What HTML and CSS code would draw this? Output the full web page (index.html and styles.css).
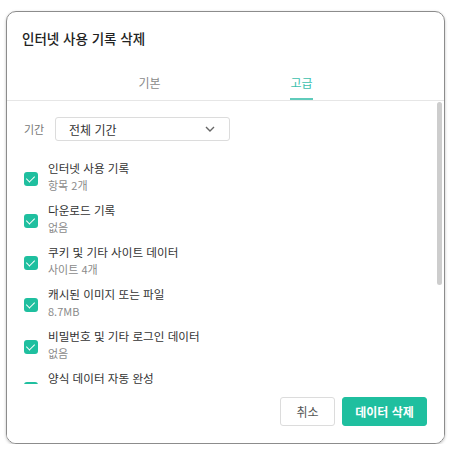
FILE: index.html
```html
<!DOCTYPE html>
<html lang="ko">
<head>
    <meta charset="UTF-8">
    <title>인터넷 사용 기록 삭제</title>
    <link rel="stylesheet" href="styles.css">
</head>
<body>
    <div class="dialog">
        <div class="head">
            <div class="title">인터넷 사용 기록 삭제</div>
            <div class="tabs">
                <div class="tab"><span>기본</span></div>
                <div class="tab on"><span>고급</span></div>
            </div>
        </div>

        <div class="body">
            <div class="range">
                <span class="range-label">기간</span>
                <div class="select">
                    <span>전체 기간</span>
                    <svg width="10" height="6" viewBox="0 0 10 6"><path d="M1 1l4 4 4-4" fill="none" stroke="#666" stroke-width="1.4"/></svg>
                </div>
            </div>

            <ul class="items">
                <li><i class="check"></i><div><p class="name">인터넷 사용 기록</p><p class="sub">항목 2개</p></div></li>
                <li><i class="check"></i><div><p class="name">다운로드 기록</p><p class="sub">없음</p></div></li>
                <li><i class="check"></i><div><p class="name">쿠키 및 기타 사이트 데이터</p><p class="sub">사이트 4개</p></div></li>
                <li><i class="check"></i><div><p class="name">캐시된 이미지 또는 파일</p><p class="sub">8.7MB</p></div></li>
                <li><i class="check"></i><div><p class="name">비밀번호 및 기타 로그인 데이터</p><p class="sub">없음</p></div></li>
                <li class="last"><i class="check"></i><div><p class="name">양식 데이터 자동 완성</p></div></li>
            </ul>
        </div>
        <!-- scroll thumb drawn over the list -->
        <div class="thumb"></div>

        <div class="foot">
            <button class="btn">취소</button>
            <button class="btn primary">데이터 삭제</button>
        </div>
    </div>
</body>
</html>
```

FILE: styles.css
```css
body{
  margin:0;
  background:#fff;
  font-family:"Noto Sans CJK KR","Noto Sans",sans-serif;
  color:#333;
}

.dialog{
  position:relative;
  margin:11px 0 0 6px;
  width:437px;
  height:431px;
  border:1px solid #8c8c8c;
  border-radius:10px;
  box-shadow:0 1px 3px rgba(0,0,0,.25);
  display:flex;
  flex-direction:column;
  overflow:hidden;
}

.head{padding-top:16px;}
.title{
  padding-left:15px;
  font-size:13.5px;
  line-height:20px;
  font-weight:500;
  color:#222;
}

.tabs{
  margin-top:26px;
  display:flex;
  justify-content:center;
  border-bottom:1px solid #e6e6e6;
}
.tab{
  width:152px;
  text-align:center;
  font-size:12px;
  line-height:17px;
  color:#8a8a8a;
}
.tab span{
  display:inline-block;
  padding-bottom:7px;
  border-bottom:2px solid transparent;
}
.tab.on span{color:#3cbfad;border-bottom-color:#5fcbbb;}

.body{
  flex:1;
  overflow:hidden;
  padding:16px 0 0 17px;
}

.thumb{
  position:absolute;
  left:430px;
  top:90px;
  width:5px;
  height:183px;
  border-radius:3px;
  background:#cdcdcd;
}

.range{display:flex;align-items:center;}
.range-label{
  font-size:11px;
  color:#777;
  width:31px;
}
.select{
  width:146px;
  height:22px;
  border:1px solid #dcdcdc;
  border-radius:3px;
  display:flex;
  align-items:center;
  justify-content:space-between;
  padding:0 14px 0 13px;
  font-size:12px;
  color:#333;
}

.items{list-style:none;margin:19px 0 0;padding:0;}
.items li{
  display:flex;
  align-items:center;
  margin-bottom:8px;
}
.items p{margin:0;line-height:17px;}
.name{font-size:11.6px;color:#333;}
.sub{font-size:11px;color:#8a8a8a;}

.check{
  width:14px;
  height:14px;
  margin:3px 10px 0 0;
  border-radius:3px;
  background:#1fbf9f;
  position:relative;
  flex:none;
}
.check::after{
  content:"";
  position:absolute;
  left:4px;
  top:2px;
  width:4px;
  height:7px;
  border:solid #fff;
  border-width:0 1.6px 1.6px 0;
  transform:rotate(45deg);
}
.items li.last{align-items:flex-start;}
.items li.last .check{margin-top:12px;}

.foot{
  position:relative;
  display:flex;
  justify-content:flex-end;
  gap:7px;
  padding:11px 17px 17px 0;
  background:#fff;
  box-shadow:0 -2px 0 #fff;
}
.btn{
  height:29px;
  border-radius:3px;
  font-family:inherit;
  font-size:12px;
  border:1px solid #dcdcdc;
  background:#fff;
  color:#555;
  width:55px;
  padding:0;
}
.btn.primary{
  width:85px;
  background:#1fbf9f;
  border-color:#1fbf9f;
  color:#fff;
  font-weight:700;
}
```
